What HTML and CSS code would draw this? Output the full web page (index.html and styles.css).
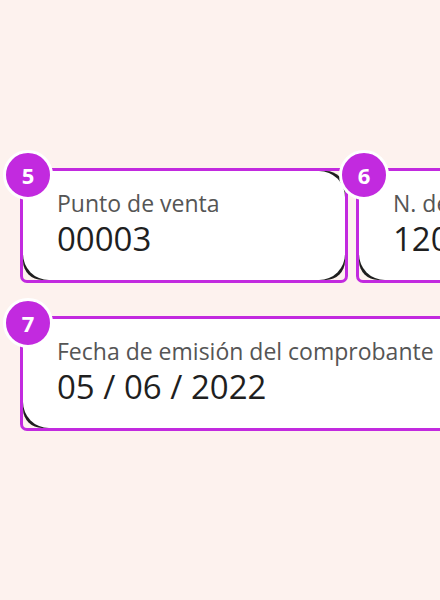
FILE: index.html
```html
<!DOCTYPE html>
<html lang="es">
<head>
    <meta charset="UTF-8">
    <meta name="viewport" content="width=device-width, initial-scale=1.0">
    <title>Datos del comprobante</title>
    <link rel="stylesheet" href="styles.css">
</head>
<body>
    <div class="form-grid">
        <!-- Punto de venta -->
        <div class="field">
            <span class="step">5</span>
            <div class="field-box">
                <div class="field-body">
                    <span class="field-label">Punto de venta</span>
                    <span class="field-value">00003</span>
                </div>
            </div>
        </div>

        <!-- Numero de comprobante -->
        <div class="field">
            <span class="step">6</span>
            <div class="field-box">
                <div class="field-body">
                    <span class="field-label">N. de comprobante</span>
                    <span class="field-value">12003</span>
                </div>
            </div>
        </div>

        <!-- Fecha -->
        <div class="field field-wide">
            <span class="step">7</span>
            <div class="field-box">
                <div class="field-body">
                    <span class="field-label">Fecha de emisión del comprobante</span>
                    <span class="field-value">05 / 06 / 2022</span>
                </div>
            </div>
        </div>
    </div>
</body>
</html>
```

FILE: styles.css
```css
html,
body {
    margin: 0;
    height: 100%;
    overflow: hidden;
}

body {
    font-family: 'Open Sans', sans-serif;
    background-color: #fdf2ee; /* Soft peach page */
    color: #222;
}

.form-grid {
    display: grid;
    grid-template-columns: 328px 328px;
    column-gap: 8px;
    row-gap: 33px;
    width: 664px;
    padding: 168px 0 0 20px;
}

.field {
    position: relative;
    height: 115px;
    box-sizing: border-box;
    border: 3px solid #c22adf; /* Purple frame */
    border-radius: 7px;
    background-color: #fdf2ee;
}

.field-wide {
    grid-column: 1 / 3;
}

.step {
    position: absolute;
    left: -20px;
    top: -21px;
    width: 44px;
    height: 44px;
    border: 3px solid #fff;
    border-radius: 50%;
    background-color: #c22adf;
    color: #fff;
    font-family: 'Noto Sans', sans-serif;
    font-weight: 700;
    font-size: 22px;
    display: flex;
    align-items: center;
    justify-content: center;
    z-index: 2;
}

/* dark layer peeking out at the rounded corners */
.field-box {
    height: 100%;
    background-color: #1e1e1e;
    border-radius: 19px;
}

.field-body {
    height: 100%;
    box-sizing: border-box;
    background-color: #fff;
    border-radius: 26px;
    padding: 17px 0 0 34px;
    display: flex;
    flex-direction: column;
    white-space: nowrap;
}

.field-label {
    font-size: 23px;
    line-height: 30px;
    color: #555;
}

.field-value {
    font-size: 33px;
    line-height: 42px;
    color: #1f1f1f;
}
```
